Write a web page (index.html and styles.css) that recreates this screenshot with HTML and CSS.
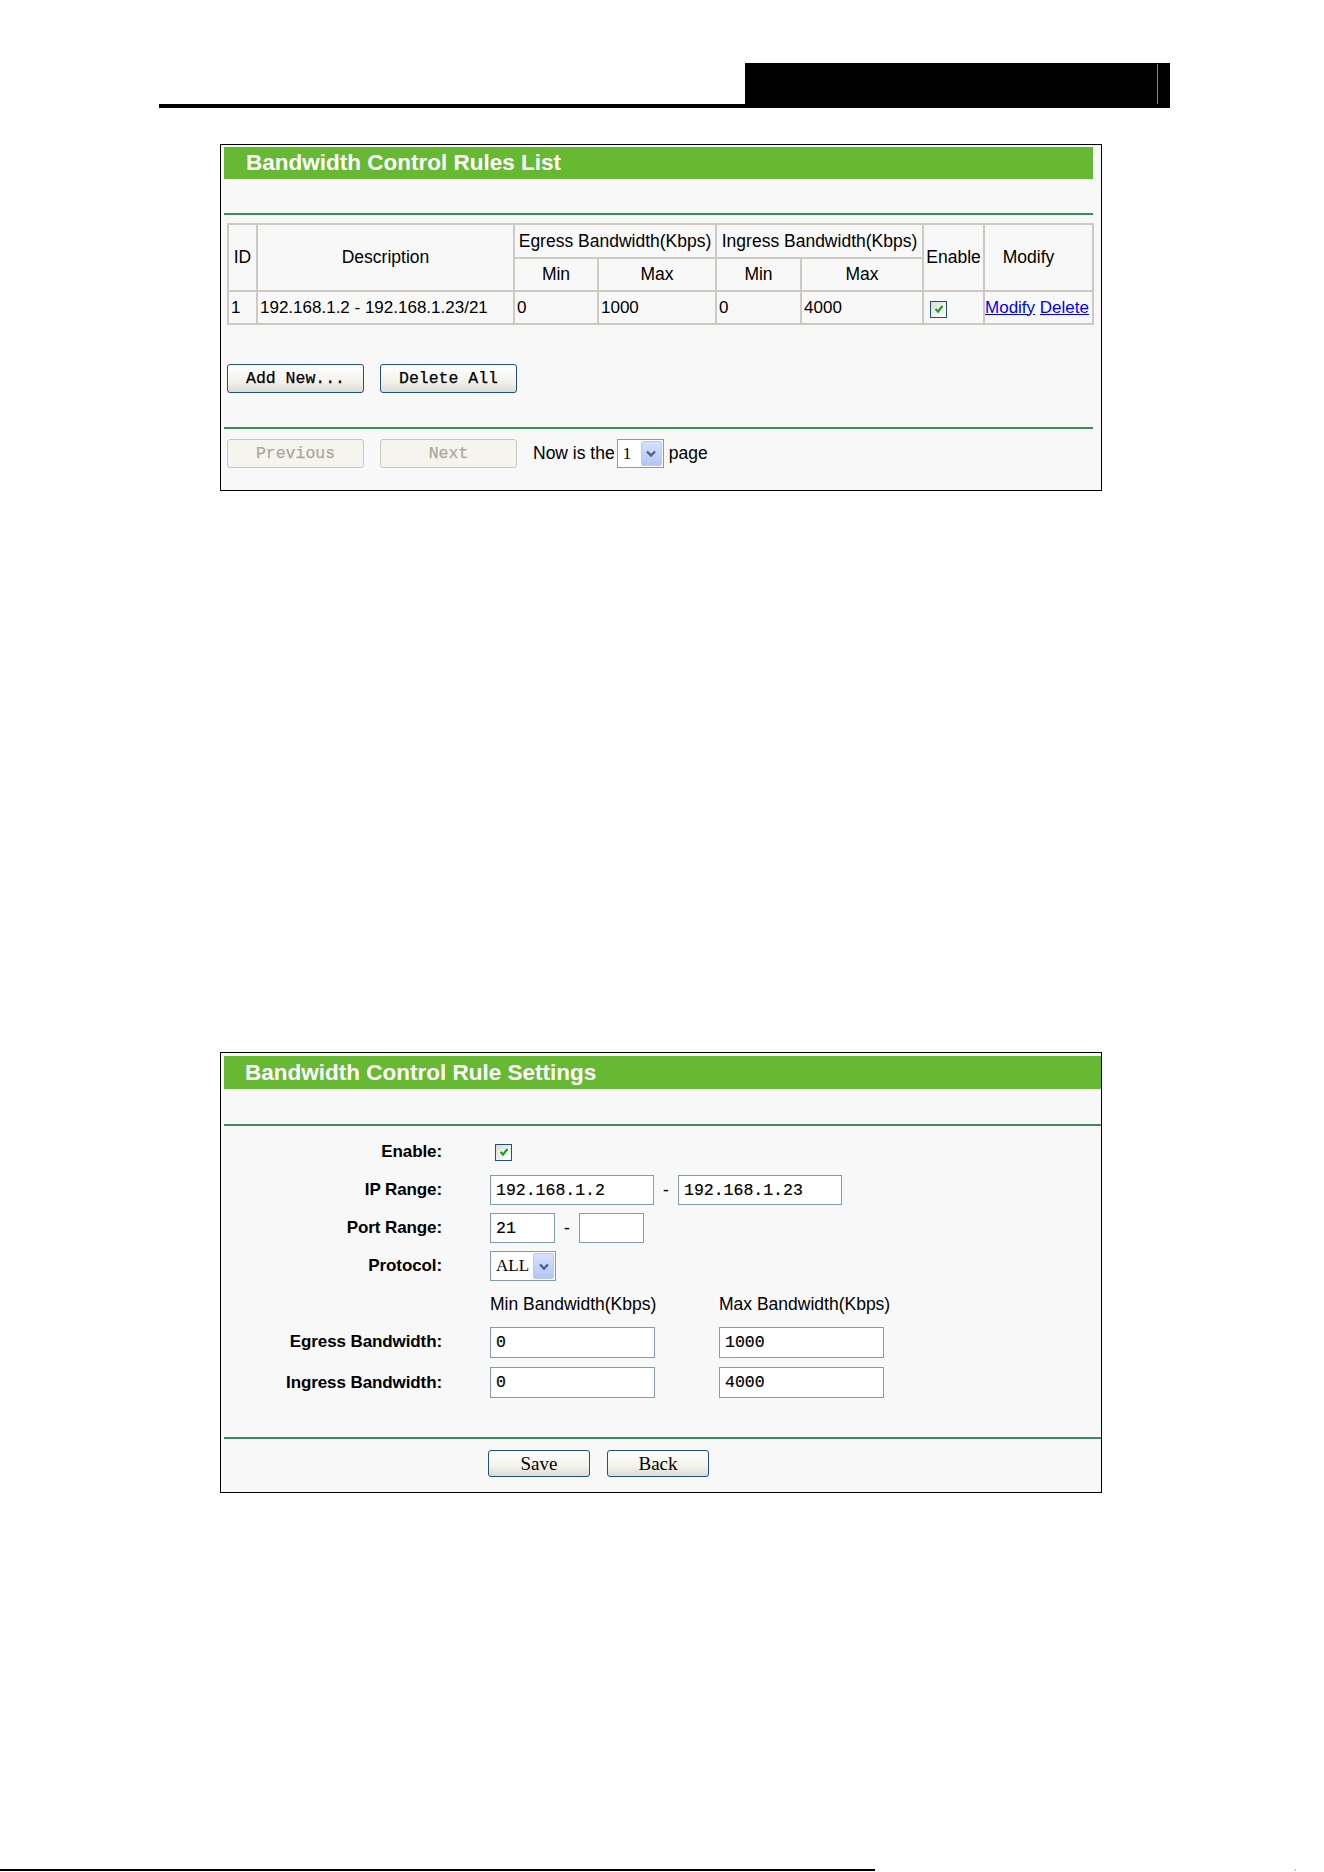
FILE: index.html
```html
<!DOCTYPE html>
<html lang="en">
<head>
    <meta charset="UTF-8">
    <meta name="viewport" content="width=device-width, initial-scale=1.0">
    <title>Bandwidth Control</title>
    <link rel="stylesheet" href="styles.css">
</head>
<body>
    <div class="doc-header">
        <div class="doc-tab"><div class="doc-tab-inner"></div></div>
    </div>

    <!-- rules list -->
    <div class="panel panel-list">
        <div class="panel-title">Bandwidth Control Rules List</div>
        <div class="divider"></div>
        <table class="rules">
            <colgroup>
                <col class="w-id"><col class="w-desc"><col class="w-emin"><col class="w-emax">
                <col class="w-imin"><col class="w-imax"><col class="w-en"><col class="w-mod">
            </colgroup>
            <tr class="head-top">
                <th rowspan="2">ID</th>
                <th rowspan="2">Description</th>
                <th colspan="2">Egress Bandwidth(Kbps)</th>
                <th colspan="2">Ingress Bandwidth(Kbps)</th>
                <th rowspan="2" class="th-enable">Enable</th>
                <th rowspan="2" class="th-modify">Modify</th>
            </tr>
            <tr class="head-sub">
                <th>Min</th><th>Max</th><th>Min</th><th>Max</th>
            </tr>
            <tr class="row">
                <td>1</td>
                <td>192.168.1.2 - 192.168.1.23/21</td>
                <td>0</td>
                <td>1000</td>
                <td>0</td>
                <td>4000</td>
                <td class="cell-check"><span class="check"><svg width="12" height="12" viewBox="0 0 12 12"><polyline points="2.5,6 5,8.5 9.5,3" fill="none" stroke="#21a121" stroke-width="2.2"/></svg></span></td>
                <td class="cell-links"><a href="#">Modify</a> <a href="#">Delete</a></td>
            </tr>
        </table>

        <div class="actions">
            <button class="btn">Add New...</button>
            <button class="btn">Delete All</button>
        </div>

        <div class="divider divider-low"></div>

        <div class="pager">
            <button class="btn" disabled>Previous</button>
            <button class="btn" disabled>Next</button>
            <span class="pager-text">Now is the</span>
            <div class="combo combo-page">
                <span class="combo-value">1</span>
                <span class="combo-btn"><svg width="12" height="9" viewBox="0 0 12 9"><polyline points="2,2.5 6,6.5 10,2.5" fill="none" stroke="#4d6185" stroke-width="2.4"/></svg></span>
            </div>
            <span class="pager-text">page</span>
        </div>
    </div>

    <!-- rule settings -->
    <div class="panel panel-form">
        <div class="panel-title">Bandwidth Control Rule Settings</div>
        <div class="divider"></div>

        <div class="form">
            <div class="label">Enable:</div>
            <div class="value">
                <span class="check check-form"><svg width="12" height="12" viewBox="0 0 12 12"><polyline points="2.5,6 5,8.5 9.5,3" fill="none" stroke="#21a121" stroke-width="2.2"/></svg></span>
            </div>

            <div class="label">IP Range:</div>
            <div class="value">
                <input class="field field-ip" type="text" value="192.168.1.2">
                <span class="dash">-</span>
                <input class="field field-ip" type="text" value="192.168.1.23">
            </div>

            <div class="label">Port Range:</div>
            <div class="value">
                <input class="field field-port" type="text" value="21">
                <span class="dash">-</span>
                <input class="field field-port" type="text" value="">
            </div>

            <div class="label">Protocol:</div>
            <div class="value">
                <div class="combo combo-proto">
                    <span class="combo-value">ALL</span>
                    <span class="combo-btn"><svg width="12" height="9" viewBox="0 0 12 9"><polyline points="2,2.5 6,6.5 10,2.5" fill="none" stroke="#4d6185" stroke-width="2.4"/></svg></span>
                </div>
            </div>

            <div class="label"></div>
            <div class="value">
                <span class="caption">Min Bandwidth(Kbps)</span>
                <span class="caption">Max Bandwidth(Kbps)</span>
            </div>

            <div class="label">Egress Bandwidth:</div>
            <div class="value">
                <span class="bw-cell"><input class="field field-bw" type="text" value="0"></span>
                <input class="field field-bw" type="text" value="1000">
            </div>

            <div class="label last">Ingress Bandwidth:</div>
            <div class="value last">
                <span class="bw-cell"><input class="field field-bw" type="text" value="0"></span>
                <input class="field field-bw" type="text" value="4000">
            </div>
        </div>

        <div class="divider divider-form"></div>

        <div class="form-buttons">
            <button class="btn btn-serif">Save</button>
            <button class="btn btn-serif">Back</button>
        </div>
    </div>

    <div class="doc-footer"><div class="footer-rule"></div><div class="footer-mark"></div></div>
</body>
</html>
```

FILE: styles.css
```css
body {
    margin: 0;
    background-color: #fff;
    color: #000;
    font-family: "Liberation Sans", Arial, sans-serif;
    font-size: 17.5px;
}

/* page header: rule with black tab on the right */
.doc-header {
    display: flex;
    justify-content: flex-end;
    width: 1011px;
    height: 41px;
    margin: 63px 0 0 159px;
    border-bottom: 4px solid #000;
}

.doc-tab {
    width: 425px;
    background-color: #000;
}

.doc-tab-inner {
    width: 412px;
    height: 40px;
    margin-top: 1px;
    border-right: 1px solid #8a8a8a;
}

/* panels */
.panel {
    box-sizing: border-box;
    width: 882px;
    margin-left: 220px;
    border: 1px solid #000;
    background-color: #f8f8f8;
    padding: 2px 0 0 3px;
}

.panel-list {
    margin-top: 36px;
    padding-bottom: 22px;
}

.panel-form {
    margin-top: 561px;
    padding-top: 3px;
    padding-bottom: 15px;
}

.panel-title {
    height: 32px;
    line-height: 32px;
    padding-left: 22px;
    background-color: #67b934;
    color: #fff;
    font-weight: bold;
    font-size: 22.5px;
}

.panel-form .panel-title {
    height: 33px;
    line-height: 33px;
    padding-left: 21px;
}

.panel-list .panel-title,
.panel-list .divider {
    margin-right: 8px;
}

.divider {
    height: 2px;
    margin-top: 34px;
    background-color: #3c8c5e;
}

.panel-form .divider {
    margin-top: 35px;
}

.panel-form .divider-form {
    margin-top: 38px;
}

/* rules table */
.rules {
    border-collapse: collapse;
    table-layout: fixed;
    width: 865px;
    margin: 8px 0 0 3px;
}

.w-id { width: 29px; }
.w-desc { width: 257px; }
.w-emin { width: 84px; }
.w-emax { width: 118px; }
.w-imin { width: 85px; }
.w-imax { width: 122px; }
.w-en { width: 61px; }
.w-mod { width: 109px; }

.rules th, .rules td {
    border: 2px solid #cdcabf;
    padding: 0 2px;
    font-weight: normal;
    white-space: nowrap;
    overflow: hidden;
}

.rules th {
    text-align: center;
}

.rules td {
    text-align: left;
    font-size: 17px;
}

.rules .th-enable {
    padding: 0;
}

.rules .th-modify {
    padding-right: 22px;
}

.head-top { height: 34px; }
.head-sub { height: 33px; }
.row { height: 33px; }

.rules a {
    color: #0000ff;
}

.rules .cell-links {
    padding-left: 0;
}

.rules .cell-check {
    padding-left: 6px;
}

.check {
    display: inline-flex;
    align-items: center;
    justify-content: center;
    box-sizing: border-box;
    width: 17px;
    height: 17px;
    border: 1px solid #1c5180;
    background: linear-gradient(135deg, #dcdcd6, #ffffff);
    vertical-align: middle;
    margin-top: 3px;
}

/* buttons */
.actions {
    display: flex;
    gap: 16px;
    margin: 39px 0 0 3px;
}

.btn {
    box-sizing: border-box;
    width: 137px;
    height: 29px;
    padding: 0;
    border: 1px solid #1d4f8c;
    border-radius: 3px;
    background: linear-gradient(#ffffff, #f3f2ec 60%, #dedcd2);
    color: #000;
    font-family: "Liberation Mono", "DejaVu Sans Mono", monospace;
    font-size: 16.5px;
    -webkit-text-stroke: 0.25px #000;
}

.btn:disabled {
    border-color: #cbc8bb;
    background: #f5f4ee;
    color: #aba897;
    -webkit-text-stroke: 0.25px #aba897;
}

.pager {
    display: flex;
    align-items: center;
    gap: 16px;
    margin: 10px 0 0 3px;
}

.pager .pager-text + .combo {
    margin-left: -14px;
}

.pager .combo + .pager-text {
    margin-left: -11px;
}

.pager-text {
    white-space: nowrap;
}

/* combo box */
.combo {
    display: inline-flex;
    align-items: stretch;
    box-sizing: border-box;
    height: 29px;
    border: 1px solid #7f9db9;
    background-color: #fff;
}

.combo-value {
    flex: 1;
    display: flex;
    align-items: center;
    padding-left: 5px;
    font-family: "Liberation Serif", serif;
    font-size: 17px;
}

.combo-btn {
    display: flex;
    align-items: center;
    justify-content: center;
    box-sizing: border-box;
    width: 21px;
    margin: 1px;
    border: 1px solid #b7caf5;
    border-radius: 2px;
    background: linear-gradient(#d6e2fd, #b2c6f6);
}

.combo-page {
    width: 47px;
}

.combo-proto {
    width: 66px;
    height: 30px;
}

/* settings form */
.form {
    display: grid;
    grid-template-columns: 218px 1fr;
    grid-auto-rows: 38px;
    column-gap: 48px;
    align-items: center;
    padding-top: 7px;
}

.form .last {
    margin-top: 5px;
}

.label {
    text-align: right;
    font-weight: bold;
    font-size: 17px;
    letter-spacing: -0.1px;
}

.value {
    display: flex;
    align-items: center;
}

.check-form {
    margin: 0 0 0 5px;
}

.field {
    box-sizing: border-box;
    height: 30px;
    margin: 0;
    padding: 0 5px;
    border: 1px solid #7f9db9;
    background-color: #fff;
    color: #000;
    font-family: "Liberation Mono", "DejaVu Sans Mono", monospace;
    font-size: 16.5px;
    -webkit-text-stroke: 0.2px #000;
    outline: none;
}

.field-ip {
    width: 164px;
}

.field-port {
    width: 65px;
}

.field-bw {
    width: 165px;
    height: 31px;
}

.dash {
    width: 24px;
    text-align: center;
}

.caption {
    font-size: 17.5px;
}

.caption:first-child,
.bw-cell {
    width: 229px;
}

.form-buttons {
    display: flex;
    gap: 17px;
    margin: 11px 0 0 264px;
}

.btn-serif {
    width: 102px;
    height: 27px;
    font-family: "Liberation Serif", serif;
    font-size: 19px;
    -webkit-text-stroke: 0;
}

/* page footer rule */
.doc-footer {
    display: flex;
    align-items: flex-end;
    height: 2px;
    margin-top: 376px;
}

.footer-rule {
    width: 875px;
    height: 2px;
    background-color: #000;
}

.footer-mark {
    width: 1px;
    height: 2px;
    margin-left: 420px;
    background-color: #d8c400;
}
```
